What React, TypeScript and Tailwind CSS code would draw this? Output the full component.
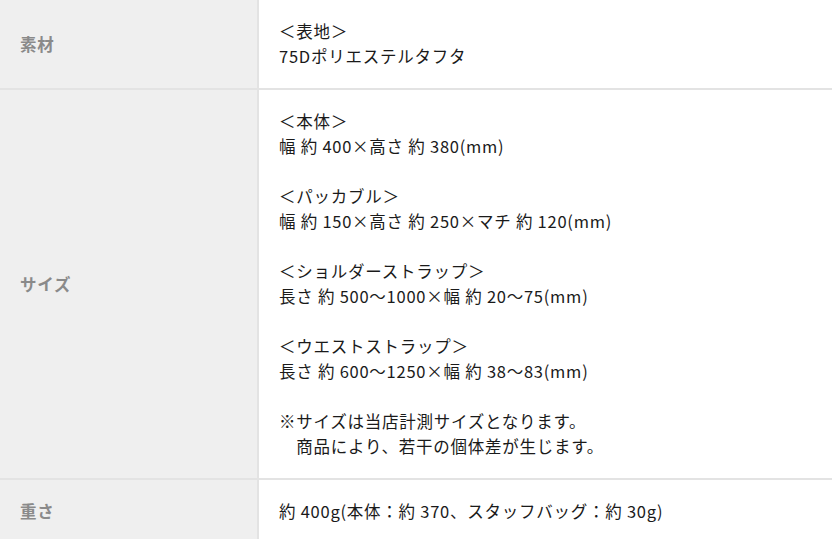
import React from "react";

const rows: { label: string; lines: string[] }[] = [
  { label: "素材", lines: ["＜表地＞", "75Dポリエステルタフタ"] },
  {
    label: "サイズ",
    lines: [
      "＜本体＞",
      "幅 約 400×高さ 約 380(mm)",
      "",
      "＜パッカブル＞",
      "幅 約 150×高さ 約 250×マチ 約 120(mm)",
      "",
      "＜ショルダーストラップ＞",
      "長さ 約 500〜1000×幅 約 20〜75(mm)",
      "",
      "＜ウエストストラップ＞",
      "長さ 約 600〜1250×幅 約 38〜83(mm)",
      "",
      "※サイズは当店計測サイズとなります。",
      "　商品により、若干の個体差が生じます。",
    ],
  },
  { label: "重さ", lines: ["約 400g(本体：約 370、スタッフバッグ：約 30g)"] },
];

export default function App() {
  return (
    <div
      className="w-[832px] h-[539px] overflow-hidden bg-white tracking-[0.75px]"
      style={{ fontFamily: '"Noto Sans CJK JP", "Noto Sans", sans-serif' }}
    >
      <div className="grid grid-cols-[259px_1fr]">
        {rows.map((r, i) => (
          <React.Fragment key={i}>
            <div className="flex items-center bg-[#efefef] border-r-2 border-b-2 border-[#e3e3e3] pl-[20px] text-[16.5px] font-bold text-[#8a8a8a]">
              {r.label}
            </div>
            <div className="border-b-2 border-[#e3e3e3] py-[19px] pl-[20px] text-[16.5px] leading-[25px] text-[#1a1a1a]">
              {r.lines.map((l, j) => (
                <div key={j} className="h-[25px] whitespace-pre">
                  {l}
                </div>
              ))}
            </div>
          </React.Fragment>
        ))}
      </div>
    </div>
  );
}
